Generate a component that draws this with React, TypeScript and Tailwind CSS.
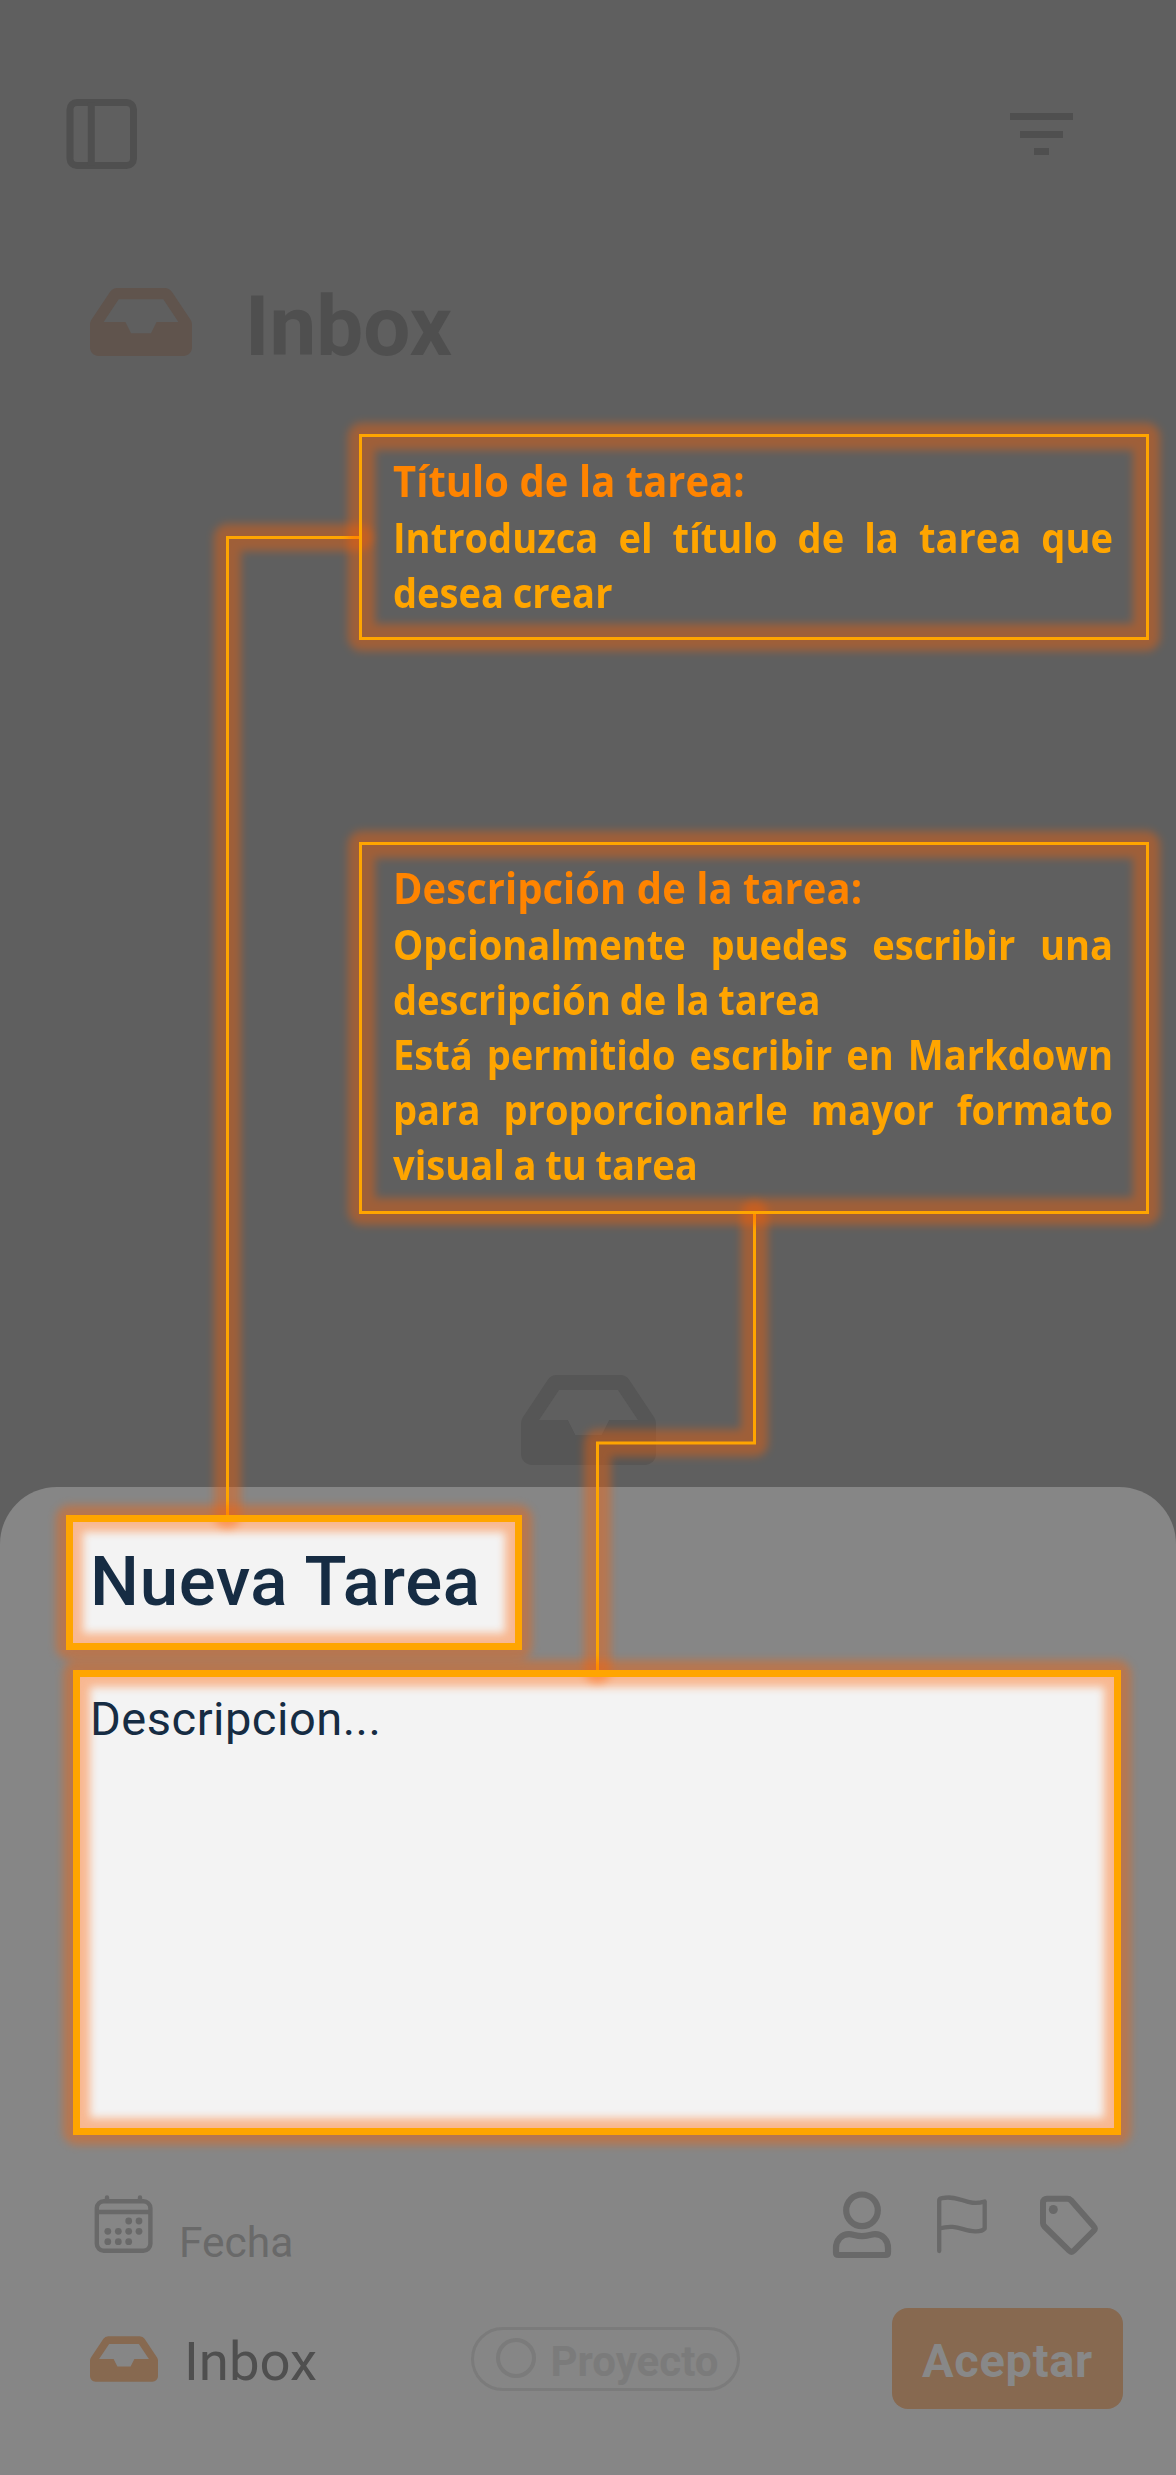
import React from "react";

function Glow({ thick = false }: { thick?: boolean }) {
  return (
    <div className="pointer-events-none absolute inset-0 z-20">
      <div
        className={
          thick
            ? "absolute -inset-[10px] rounded-[14px] border-[27px] border-[#ff6000] opacity-40 blur-[4px]"
            : "absolute -inset-[11px] rounded-[14px] border-[27px] border-[#ff6000] opacity-40 blur-[4px]"
        }
      />
      <div
        className={
          thick
            ? "absolute inset-0 border-[7px] border-[#ffa500]"
            : "absolute inset-0 border-[3px] border-[#ffa500]"
        }
      />
    </div>
  );
}

function InboxIcon({ className }: { className: string }) {
  return (
    <svg viewBox="0 64 576 384" className={className} fill="currentColor">
      <path d="M567.938 243.908L462.25 85.374A48.003 48.003 0 0 0 422.311 64H153.689a48 48 0 0 0-39.938 21.374L8.062 243.908A47.994 47.994 0 0 0 0 270.533V400c0 26.51 21.49 48 48 48h480c26.51 0 48-21.49 48-48V270.533a47.994 47.994 0 0 0-8.062-26.625zM162.252 128h251.497l85.333 128H376l-32 64H232l-32-64H76.918l85.334-128z" />
    </svg>
  );
}

type Line = { text: string; justify?: boolean };

function Callout({ title, lines, className }: { title: string; lines: Line[]; className: string }) {
  return (
    <section className={"absolute left-[359px] w-[790px] pl-[34px] font-['Open_Sans',sans-serif] font-bold " + className}>
      <Glow />
      <div className="relative z-30 w-[775px] origin-left scale-x-[0.929]">
        <h2 className="h-[57px] whitespace-nowrap text-[43px] leading-[55px] tracking-[0.05px] text-[#ff8400]">{title}</h2>
        {lines.map((l) => (
          <p
            key={l.text}
            className={
              "h-[55px] whitespace-nowrap text-[41px] leading-[55px] text-[#ffa500] " +
              (l.justify ? "[text-align-last:justify]" : "[word-spacing:-1.3px]")
            }
          >
            {l.text}
          </p>
        ))}
      </div>
    </section>
  );
}

function Connectors() {
  const first = "M359 537.5H227.5V1515";
  const second = "M754.5 1214V1443H597.5V1670";
  return (
    <svg className="pointer-events-none absolute left-0 top-0 z-10 h-[2475px] w-[1176px]" viewBox="0 0 1176 2475" fill="none">
      {[first, second].map((d) => (
        <g key={d}>
          <path d={d} stroke="#ff6000" strokeWidth="27" strokeLinejoin="round" strokeLinecap="round" className="opacity-40 blur-[4px]" />
          <path d={d} stroke="#ffa500" strokeWidth="3" />
        </g>
      ))}
    </svg>
  );
}

export default function App() {
  return (
    <main className="relative flex h-[2475px] w-[1176px] flex-col overflow-hidden bg-[#5f5f5f] font-['Roboto',sans-serif]">
      <div className="flex h-[1487px] flex-col">
        <header className="flex items-start justify-between pl-[66px] pr-[103px] pt-[99px]">
          <svg viewBox="0 0 71 70" className="h-[70px] w-[71px] text-[#4f4f4f]" fill="none" stroke="currentColor" strokeWidth="7">
            <rect x="4" y="3.5" width="63.5" height="63" rx="7" />
            <path d="M25.3 3.5V66.5" />
          </svg>
          <div className="mt-[14px] flex w-[63px] flex-col items-center gap-[10.5px]">
            <div className="h-[7px] w-[63px] bg-[#4f4f4f]" />
            <div className="h-[7px] w-[43px] bg-[#4f4f4f]" />
            <div className="h-[7px] w-[15px] bg-[#4f4f4f]" />
          </div>
        </header>
        <div className="mt-[106px] flex h-[100px] items-center pl-[90px] text-[#4f4f4f]">
          <InboxIcon className="mt-[-6px] h-[68px] w-[102px] text-[#60544d]" />
          <h1 className="ml-[53px] mt-[3px] text-[83.5px] font-bold leading-[100px]">Inbox</h1>
        </div>
        <div className="mt-auto flex justify-center pb-[22px]">
          <InboxIcon className="h-[90px] w-[135px] text-[#565656]" />
        </div>
      </div>

      <section className="flex h-[988px] flex-col rounded-t-[57px] bg-[#868686] pt-[28px]">
        <div className="relative ml-[66px] h-[135px] w-[456px] bg-[#f3f3f3] pl-[24px] pt-[26px] text-[#162c43]">
          <h2 className="whitespace-nowrap text-[69px] font-medium leading-[81px] tracking-[0.7px]">Nueva Tarea</h2>
          <Glow thick />
        </div>
        <div className="relative ml-[73px] mt-[20px] h-[465px] w-[1048px] bg-[#f3f3f3] pl-[17px] pt-[21px] text-[#162c43]">
          <p className="whitespace-nowrap text-[47px] leading-[56px] tracking-[0.5px]">Descripcion...</p>
          <Glow thick />
        </div>

        <div className="mt-[54px] flex h-[84px] items-start text-[#696969]">
          <svg viewBox="0 0 60 60" className="ml-[94px] mt-[5px] h-[60px] w-[60px]" fill="none" stroke="currentColor" strokeWidth="4.4">
            <rect x="2.8" y="7.2" width="53.6" height="49.6" rx="7" />
            <path d="M2.8 18H56.4" />
            <path d="M13 3.5V6M46 3.5V6" strokeLinecap="round" />
            <g fill="currentColor" stroke="none">
              {[[34.7, 27], [45, 27], [13.8, 37.3], [24.3, 37.3], [34.7, 37.3], [45, 37.3], [13.8, 47.7], [24.3, 47.7], [34.7, 47.7]].map(([x, y]) => (
                <circle key={`${x}-${y}`} cx={x} cy={y} r="3.4" />
              ))}
            </g>
          </svg>
          <span className="ml-[25px] mt-[29px] text-[42.5px] leading-[50px]">Fecha</span>
          <svg viewBox="0 0 60 70" className="ml-auto h-[70px] w-[60px]" fill="none" stroke="currentColor" strokeWidth="6.2" strokeLinejoin="round">
            <circle cx="30" cy="21.3" r="15.8" />
            <path d="M4 63.4V59C4 51 9.5 45.2 17 45.2C21 45.2 24 47.2 30 47.2S39 45.2 43 45.2C50.5 45.2 56 51 56 59V63.4C56 65.3 55 66 53.5 66H6.5C5 66 4 65.3 4 63.4Z" />
          </svg>
          <svg viewBox="0 0 52 60" className="ml-[44px] mt-[5px] h-[60px] w-[52px]" fill="none" stroke="currentColor" strokeWidth="4.3" strokeLinecap="round" strokeLinejoin="round">
            <path d="M3.2 57V6.5C3.2 5 4.5 4.5 6 4.2C25 0.5 30 13 48.7 7.5V34.5C47 36.5 43 37.5 39 37.3C27 37 20 29.5 3.2 34.5" />
          </svg>
          <svg viewBox="0 0 60 60" className="ml-[51px] mr-[77px] mt-[6px] h-[60px] w-[60px]" fill="none" stroke="currentColor" strokeWidth="6" strokeLinejoin="round">
            <path d="M4 7.5C4 5 5.5 3.8 8 3.8H28.5Q30.5 3.8 32 5.3L54.5 31Q57 33.5 54.5 36L35 55.5Q32.5 58 30 55.5L5.5 31.5Q4 30 4 28Z" />
            <circle cx="14.3" cy="14.5" r="4.5" fill="currentColor" stroke="none" />
          </svg>
        </div>

        <div className="mt-[35px] flex h-[101px] items-center">
          <InboxIcon className="ml-[90px] h-[46px] w-[68px] text-[#876950]" />
          <span className="ml-[26px] mt-[5px] w-[131px] text-[54.5px] leading-[64px] text-[#4f4f4f]">Inbox</span>
          <div className="ml-[155.5px] flex h-[64px] w-[269px] items-center rounded-full border-[3px] border-[#7b7b7b] pl-[22px] text-[#7b7b7b]">
            <div className="mt-[-2px] h-[40px] w-[40px] rounded-full border-4 border-[#7b7b7b]" />
            <span className="ml-[15px] mt-[6px] text-[42px] font-bold leading-[50px]">Proyecto</span>
          </div>
          <button className="ml-auto mr-[53px] h-[101px] w-[231px] rounded-[16px] bg-[#876950] pt-[5px] text-[47px] font-bold leading-[54px] tracking-[0.7px] text-[#888888]">
            Aceptar
          </button>
        </div>
      </section>

      <Connectors />
      <Callout
        className="top-[434px] h-[206px] pt-[19px]"
        title="Título de la tarea:"
        lines={[{ text: "Introduzca el título de la tarea que", justify: true }, { text: "desea crear" }]}
      />
      <Callout
        className="top-[842px] h-[372px] pt-[18px]"
        title="Descripción de la tarea:"
        lines={[
          { text: "Opcionalmente puedes escribir una", justify: true },
          { text: "descripción de la tarea" },
          { text: "Está permitido escribir en Markdown", justify: true },
          { text: "para proporcionarle mayor formato", justify: true },
          { text: "visual a tu tarea" },
        ]}
      />
    </main>
  );
}
